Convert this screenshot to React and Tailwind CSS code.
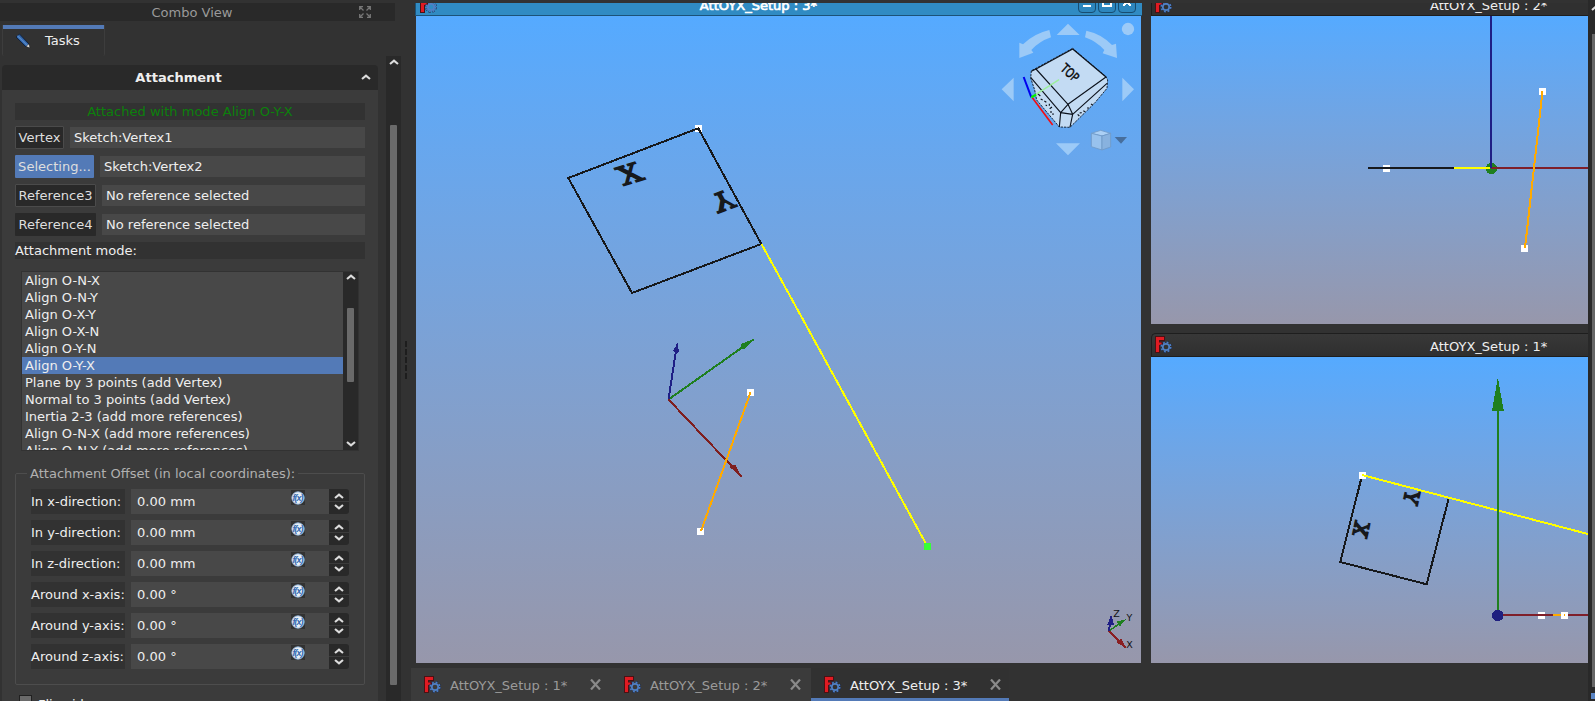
import React from "react";

const modes = [
  "Align O-N-X",
  "Align O-N-Y",
  "Align O-X-Y",
  "Align O-X-N",
  "Align O-Y-N",
  "Align O-Y-X",
  "Plane by 3 points (add Vertex)",
  "Normal to 3 points (add Vertex)",
  "Inertia 2-3 (add more references)",
  "Align O-N-X (add more references)",
  "Align O-N-Y (add more references)",
];

const offsets = [
  ["In x-direction:", "0.00 mm"],
  ["In y-direction:", "0.00 mm"],
  ["In z-direction:", "0.00 mm"],
  ["Around x-axis:", "0.00 °"],
  ["Around y-axis:", "0.00 °"],
  ["Around z-axis:", "0.00 °"],
];

const references = [
  { label: "Vertex", value: "Sketch:Vertex1", button: "w-[49px] bg-[#292929] border border-[#4b4b4b]" },
  { label: "Selecting...", value: "Sketch:Vertex2", button: "w-[79px] bg-[#537ab7]" },
  { label: "Reference3", value: "No reference selected", button: "w-[81px] bg-[#292929] border border-[#4b4b4b]" },
  { label: "Reference4", value: "No reference selected", button: "w-[81px] bg-[#292929]" },
];

function Chevron({ down = false, className = "" }) {
  return (
    <svg viewBox="0 0 10 6" className={"h-[6px] w-[10px] shrink-0 " + className}>
      <path d={down ? "M1 1l4 3.4L9 1" : "M1 5l4-3.4L9 5"} fill="none" stroke="#dcdcdc" strokeWidth="2.1" />
    </svg>
  );
}

function AppIcon({ className = "" }) {
  return (
    <svg viewBox="0 0 17 17" className={"h-[17px] w-[17px] shrink-0 " + className}>
      <g fill="#4a1114">
        <rect x="0" y="0" width="5" height="17" />
        <rect x="0" y="0" width="10" height="5" />
        <rect x="3" y="5.5" width="5" height="4" />
      </g>
      <g fill="#e01b22">
        <rect x="1" y="1" width="3" height="15" />
        <rect x="1" y="1" width="8" height="3" />
        <rect x="3" y="6.5" width="3.5" height="2.4" />
      </g>
      <circle cx="11" cy="11" r="4.9" fill="none" stroke="#1c2c4e" strokeWidth="2.2" strokeDasharray="2.2 1.65" />
      <circle cx="11" cy="11" r="4.7" fill="none" stroke="#4f7fc4" strokeWidth="1.6" strokeDasharray="1.8 1.9" />
      <circle cx="11" cy="11" r="3.2" fill="none" stroke="#4f7fc4" strokeWidth="1.7" />
    </svg>
  );
}

function Formula() {
  return (
    <div className="mt-px flex h-[15px] w-[14px] items-center justify-center bg-[#323232]">
      <svg viewBox="0 0 14 14" className="h-[14px] w-[14px]">
        <circle cx="7" cy="7" r="6.2" fill="#e9eff5" stroke="#8fb4dc" strokeWidth="0.9" />
        <text x="6.600" y="10" textAnchor="middle" fontSize="9" fontStyle="italic" fontWeight="bold" letterSpacing="-1" fontFamily="Liberation Sans, sans-serif" fill="#3268b0">
          f(x)
        </text>
      </svg>
    </div>
  );
}

function Marker({ x, y, color = "#fff" }) {
  return <rect x={x - 3.5} y={y - 3.5} width="7" height="7" fill={color} shapeRendering="crispEdges" />;
}

function PlaneLetter({ m, size, children }) {
  return (
    <text transform={m} y={size * 0.365} textAnchor="middle" fontSize={size} fontFamily="DejaVu Serif, serif" fill="#17191c" stroke="#17191c" strokeWidth="1.5">
      {children}
    </text>
  );
}

function NavCube() {
  return (
    <g transform="translate(980 0) scale(0.33333)">
      <g fill="#9ccaf7">
        <path d="M264 71l35 34h-69z M427 233l35 35-35 36z M101 233l-36 35 36 36z M228 430h72l-36 36z" />
        <circle cx="444" cy="87" r="18.5" />
        <path d="M208 90l5 22q-35 12-59 38l6 8-42 16 0-46 11 5q32-32 79-43z" />
        <path d="M319 92l-4 20q34 12 58 38l-5 10 43 14-3-43-12 4q-31-33-77-43z" />
      </g>
      <path d="M278 145L378 230L383 240L381 265L345 308L270 382L238 381L170 300L164 270L152 234L154 212L168 205Z" fill="#c3dbf3" stroke="#17263a" strokeWidth="3" strokeDasharray="7 3" />
      <g fill="none" stroke="#0c121c" strokeWidth="3.4" strokeLinejoin="round">
        <path d="M278 147L168 207L264 313L378 231Z" />
        <path d="M154 214L168 207M152 232L242 338L264 313L278 343L242 338L238 381M278 343L270 381M278 343L381 250" />
        <path d="M172 280L181 288M182 297l6 3M193 303l6 4M197 315l4 2M208 311v6M209 326l7-5M213 333v6M219 340v5M293 343l5 5M299 339l6-1M310 332l5 3M321 324l6 0M333 312l5 3" strokeWidth="3.4" />
      </g>
      <text transform="matrix(.6 .56 -.72 .8 270 218)" y="13" textAnchor="middle" fontSize="36" fontFamily="DejaVu Sans, sans-serif" fill="#050505" stroke="#050505" strokeWidth="1.2">
        TOP
      </text>
      <path d="M131 231L154 292" stroke="#0000ee" strokeWidth="6" />
      <path d="M156 292L218 375" stroke="#f20d12" strokeWidth="5" />
      <path d="M154 292L237 239" stroke="#9cf09c" strokeWidth="4.5" />
      <path d="M154 292L168 284" stroke="#00f000" strokeWidth="7" />
      <g stroke="#6f99c7" strokeWidth="2.5">
        <path d="M334 400L362 391L392 400L366 408Z" fill="#abd0f5" />
        <path d="M334 400L366 408V450L334 440Z" fill="#98c2ed" />
        <path d="M366 408L392 400V441L366 450Z" fill="#88b2df" />
      </g>
      <path d="M404 411H441L423 431Z" fill="#476e9c" />
    </g>
  );
}

function MainScene() {
  return (
    <svg viewBox="416 16 725 647" className="block h-[647px] w-[725px] bg-linear-to-b from-[#55aaff] to-[#9797ab]">
      <Marker x={698.5} y={128.5} />
      <path d="M698.3 128.3L568.3 178L632 293L761.3 244Z" fill="none" stroke="#17191c" strokeWidth="2" shapeRendering="crispEdges" />
      <PlaneLetter m="matrix(1.13 -.35 .486 .874 629.7 173.7)" size={27}>X</PlaneLetter>
      <PlaneLetter m="matrix(1.08 -.4 -.486 -.9 723.2 201)" size={26}>Y</PlaneLetter>
      <path d="M761.5 244L927.5 546.5" stroke="#ffff00" strokeWidth="2" shapeRendering="crispEdges" />
      <Marker x={927.5} y={546.5} color="#38ff38" />
      <g strokeWidth="2" shapeRendering="crispEdges">
        <path d="M668.5 399.5L753.7 339.3" stroke="#1f7f1f" />
        <path d="M668.5 399.5L741.7 476.7" stroke="#7f1f1f" />
        <path d="M668.5 399.5L677 344" stroke="#1f1f85" />
        <path d="M754 339L741 344L740.5 349L745 349Z" fill="#1f7f1f" stroke="none" />
        <path d="M742 477L729.5 467L731 466L735 464.5Z" fill="#7f1f1f" stroke="none" />
        <path d="M677.5 343L673 351L676 354L679 351.5Z" fill="#1f1f85" stroke="none" />
      </g>
      <Marker x={750.5} y={392.5} />
      <Marker x={700.5} y={531.5} />
      <path d="M750.5 392.5L701 531" stroke="#ffaa00" strokeWidth="2" shapeRendering="crispEdges" />
      <NavCube />
      <g shapeRendering="crispEdges" strokeWidth="1.6">
        <path d="M1109 631L1121 622.5" stroke="#1f7f1f" />
        <path d="M1109 631L1125.7 647.7" stroke="#8a1f22" />
        <path d="M1109 631L1110.5 620" stroke="#1f1f85" strokeWidth="2" />
        <path d="M1111 617L1108.5 624H1113Z" fill="#1f1f85" stroke="#1f1f85" />
        <path d="M1123.7 620.7L1118 622L1120 625Z" fill="#1f7f1f" stroke="#1f7f1f" />
        <path d="M1124 646L1117.5 642L1121 640Z" fill="#8a1f22" stroke="#8a1f22" />
      </g>
      <g fontFamily="DejaVu Sans, sans-serif" fontSize="9.5" fill="#111" textAnchor="middle">
        <text x="1116.5" y="617">Z</text>
        <text x="1129.5" y="621">Y</text>
        <text x="1129.5" y="648">X</text>
      </g>
    </svg>
  );
}

function FrontScene() {
  return (
    <svg viewBox="1151 16 437 308" className="block h-[308px] w-[437px] bg-linear-to-b from-[#55aaff] to-[#9797ab]">
      <Marker x={1386.5} y={168.5} />
      <circle cx="1491.3" cy="168.5" r="5.7" fill="#1f7f1f" shapeRendering="crispEdges" />
      <g strokeWidth="2" shapeRendering="crispEdges">
        <path d="M1368 168H1454" stroke="#17191c" />
        <path d="M1454 168H1490" stroke="#ffff00" />
        <path d="M1491 168H1588" stroke="#7f1f2a" />
        <path d="M1491 16V168" stroke="#1f1f85" />
      </g>
      <Marker x={1542.5} y={91.5} />
      <Marker x={1524.5} y={248.5} />
      <path d="M1542.5 91L1525 248" stroke="#ffaa00" strokeWidth="2" shapeRendering="crispEdges" />
    </svg>
  );
}

function TopScene() {
  return (
    <svg viewBox="1151 357 437 306" className="block h-[306px] w-[437px] bg-linear-to-b from-[#55aaff] to-[#9797ab]">
      <path d="M1362 475.5L1340.3 562L1426.7 584.3L1448.5 499" fill="none" stroke="#17191c" strokeWidth="2" shapeRendering="crispEdges" />
      <Marker x={1362.5} y={475.5} />
      <path d="M1362 475L1588 534" stroke="#ffff00" strokeWidth="2" shapeRendering="crispEdges" />
      <PlaneLetter m="matrix(-.22 1.05 .968 .25 1361.2 529.3)" size={20}>X</PlaneLetter>
      <PlaneLetter m="matrix(-.22 1 -.968 -.25 1411.6 497.4)" size={20}>Y</PlaneLetter>
      <Marker x={1541.5} y={615.5} />
      <g strokeWidth="2" shapeRendering="crispEdges">
        <path d="M1498 410V615" stroke="#1f7f1f" />
        <path d="M1500 615H1588" stroke="#7f1f2a" />
        <path d="M1553 615H1562" stroke="#ffaa00" />
      </g>
      <path d="M1497.8 377.5L1503.7 410.5H1492Z" fill="#1f7f1f" shapeRendering="crispEdges" />
      <Marker x={1564.5} y={615.5} />
      <rect x="1564" y="614" width="1" height="2" fill="#ffaa00" />
      <circle cx="1497.7" cy="615.5" r="5.8" fill="#1f1f7f" shapeRendering="crispEdges" />
    </svg>
  );
}

function WindowButton({ children }) {
  return (
    <div className="flex h-[14px] w-[18px] justify-center rounded-b-[4px] border border-[#174c71] bg-[#2d86bd]">
      <svg viewBox="0 0 12 12" className="-mt-[4px] h-[12px] w-[12px]" fill="none" stroke="#fff" strokeWidth="2" shapeRendering="crispEdges">
        {children}
      </svg>
    </div>
  );
}

function DocTab({ title, active }) {
  return (
    <div className={"flex h-[33px] shrink-0 items-center pl-[13px] " + (active ? "w-[198px] border-b-[3px] border-[#537ab7] bg-[#313131] text-[#eee]" : "w-[200px] bg-[#3b3b3b] pb-[3px] text-[#9a9a9a]")}>
      <AppIcon className="mt-[2px]" />
      <span className="ml-[9px] mt-[4px] w-[140px] whitespace-pre">{title}</span>
      <svg viewBox="0 0 11 11" className="mr-auto mt-[3px] h-[11px] w-[11px] shrink-0">
        <path d="M1 .5l9 10M10 .5l-9 10" stroke="#8a8a8a" strokeWidth="2.2" />
      </svg>
    </div>
  );
}

export default function App() {
  return (
    <div className="flex h-[701px] w-[1595px] overflow-hidden whitespace-nowrap bg-[#323232] font-['DejaVu_Sans',sans-serif] text-[13.04px] leading-[17px] text-[#eee]">
      <aside className="flex h-full w-[402px] shrink-0 flex-col pt-[3px]">
        <div className="grid h-[18px] w-[395px] shrink-0 grid-cols-[1fr_36px] items-center bg-[#292929] text-[#9a9a9a]">
          <span className="pl-[25px] pt-px text-center">Combo View</span>
          <svg viewBox="0 0 12 12" className="h-[12px] w-[12px]" fill="none" stroke="#777" strokeWidth="1.3">
            <path d="M.7 4V.7H4M1 1l3.5 3.5M8 .7h3.3V4M11 1L7.500 4.500M.7 8v3.300H4M1 11l3.500-3.500M8 11.300h3.300V8M11 11L7.500 7.500" />
          </svg>
        </div>
        <div className="ml-[2px] mt-[4px] flex h-[31px] w-[103px] shrink-0 flex-col rounded-b-[2px] border-x border-[#3d3d3d]">
          <div className="h-[4px] bg-[#537ab7]" />
          <div className="flex items-center pl-[12px] pt-[3px]">
            <svg viewBox="0 0 16 16" className="h-[16px] w-[16px]">
              <path d="M1 4L4.500 1L14 11L11 14Z" fill="#2f62a5" stroke="#14233c" strokeWidth="1" />
              <path d="M2.500 2.700L12.500 12.500" stroke="#5588c8" strokeWidth="1.300" />
              <path d="M11 13.500L13.700 11L15 14.800Z" fill="#f2f2f2" stroke="#222" strokeWidth=".5" />
            </svg>
            <span className="ml-[14px]">Tasks</span>
          </div>
        </div>
        <div className="flex min-h-0 flex-1">
          <div className="ml-[2px] flex w-[376px] shrink-0 flex-col overflow-hidden pt-[9px]">
            <div className="grid h-[25px] shrink-0 grid-cols-[1fr_17px] items-center rounded-t-[4px] bg-[#292929]">
              <span className="pr-[6px] text-center font-bold">Attachment</span>
              <Chevron className="-mt-px" />
            </div>
            <div className="h-[620px] shrink-0 bg-[#3b3b3b] pl-[13px] pt-[13px]">
              <div className="h-[17px] w-[350px] bg-[#323232] text-center leading-[18px] text-[#0c800c]">Attached with mode Align O-Y-X</div>
              <div className="mt-[6px] flex w-[350px] flex-col gap-[6px]">
                {references.map((r) => (
                  <div key={r.label} className="flex h-[23px] items-center gap-[6px]">
                    <div className={"flex h-[23px] shrink-0 items-center justify-center rounded-[1px] text-[#dedede] " + r.button}>{r.label}</div>
                    <div className="flex h-[21px] flex-1 items-center bg-[#484848] pl-[4px]">{r.value}</div>
                  </div>
                ))}
              </div>
              <div className="mt-[6px] h-[17px] w-[350px] bg-[#323232] leading-[18px]">Attachment mode:</div>
              <div className="ml-[6px] mt-[12px] flex h-[180px] w-[338px] overflow-hidden border border-[#323232] bg-[#484848]">
                <div className="w-[321px]">
                  {modes.map((m) => (
                    <div key={m} className={"h-[17px] pl-[3px] leading-[18px] " + (m === "Align O-Y-X" ? "bg-[#537ab7]" : "")}>{m}</div>
                  ))}
                </div>
                <div className="flex w-[15px] flex-col items-center bg-[#292929] pb-[3px] pt-[2px]">
                  <Chevron />
                  <div className="mt-[28px] h-[74px] w-[7px] rounded-[1px] bg-[#6a6a6a]" />
                  <Chevron down className="mt-auto" />
                </div>
              </div>
              <fieldset className="mt-[14px] h-[220px] w-[350px] rounded-[2px] border border-[#4d4d4d] pl-[15px]">
                <legend className="-ml-[4px] h-[17px] px-[3px] leading-[18px] text-[#b0b0b0]">Attachment Offset (in local coordinates):</legend>
                <div className="mt-[7px] flex flex-col gap-[6px]">
                  {offsets.map(([label, value]) => (
                    <div key={label} className="flex h-[25px]">
                      <div className="flex w-[94px] items-center bg-[#323232]">{label}</div>
                      <div className="ml-[6px] flex w-[198px] items-center bg-[#484848] pl-[6px]">
                        <span className="w-[154px]">{value}</span>
                        <div className="self-start"><Formula /></div>
                      </div>
                      <div className="flex w-[20px] flex-col gap-px overflow-hidden rounded-r-[3px]">
                        <div className="flex flex-1 items-center justify-center bg-[#292929] pr-px pt-[2px]"><Chevron /></div>
                        <div className="flex flex-1 items-center justify-center bg-[#292929] pb-[2px] pr-px"><Chevron down /></div>
                      </div>
                    </div>
                  ))}
                </div>
              </fieldset>
              <div className="ml-[4px] mt-[7px] flex">
                <div className="mt-[3px] h-[13px] w-[13px] border border-[#202020] bg-[#6a6a6a]" />
                <span className="ml-[6px] pt-[4px]">Flip sides</span>
              </div>
            </div>
          </div>
          <div className="ml-[8px] flex w-[15px] flex-col items-center bg-[#292929] pt-[3px]">
            <Chevron />
            <div className="mt-[60px] h-[560px] w-[7px] shrink-0 rounded-[1px] bg-[#6a6a6a]" />
          </div>
        </div>
      </aside>

      <div className="flex w-[9px] shrink-0 flex-col gap-[2px] pl-[3px] pt-[341px]">
        {[0, 1, 2, 3, 4].map((i) => (
          <div key={i} className="h-[6px] w-[2px] bg-[#1d1d1d]" />
        ))}
      </div>

      <main className="flex w-[1177px] shrink-0 flex-col pt-[3px]">
        <div className="flex h-[660px] shrink-0">
          <section className="w-[730px] shrink-0 pl-[4px]">
            <div className="flex h-[13px] w-[727px] overflow-hidden border-b border-l border-[#1b5379] bg-[#308bc3]">
              <AppIcon className="-mt-[7px] ml-[4px]" />
              <span className="-mt-[6px] w-[641px] pl-[2px] text-center text-[#fff] [-webkit-text-stroke:0.7px_#fff]">AttOYX_Setup : 3*</span>
              <div className="-mt-[4px] flex gap-[2px]">
                <WindowButton><path d="M2 10H10" /></WindowButton>
                <WindowButton><path d="M2 3H10V10H2Z" strokeWidth="1.500" /></WindowButton>
                <WindowButton><path d="M2 2l8 8M10 2l-8 8" /></WindowButton>
              </div>
            </div>
            <div className="ml-[1px]"><MainScene /></div>
          </section>
          <section className="ml-[10px] w-[437px] shrink-0">
            <div className="flex h-[13px] overflow-hidden border-b border-l border-[#1e1e1e] bg-[#303030]">
              <AppIcon className="-mt-[7px] ml-[3px]" />
              <span className="-mt-[6px] ml-[258px]">AttOYX_Setup : 2*</span>
            </div>
            <FrontScene />
            <div className="mt-[9px] flex h-[24px] items-center overflow-hidden rounded-tl-[5px] border border-r-0 border-[#1e1e1e] bg-linear-to-b from-[#383838] to-[#2f2f2f]">
              <AppIcon className="-mt-px ml-[3px]" />
              <span className="ml-[258px] pt-[2px]">AttOYX_Setup : 1*</span>
            </div>
            <TopScene />
          </section>
        </div>
        <div className="mt-[5px] flex h-[33px]">
          <DocTab title="AttOYX_Setup : 1*" />
          <DocTab title="AttOYX_Setup : 2*" />
          <DocTab title="AttOYX_Setup : 3*" active />
        </div>
      </main>

      <div className="flex w-[7px] shrink-0 flex-col overflow-hidden bg-[#292929] pl-[3px] pt-[5px]">
        <Chevron />
        <div className="ml-[1px] mt-[23px] h-[653px] w-[8px] shrink-0 bg-[#666]" />
        <div className="mt-[6px] h-[6px] w-[4px] shrink-0 bg-[#5b86c5]" />
      </div>
    </div>
  );
}
